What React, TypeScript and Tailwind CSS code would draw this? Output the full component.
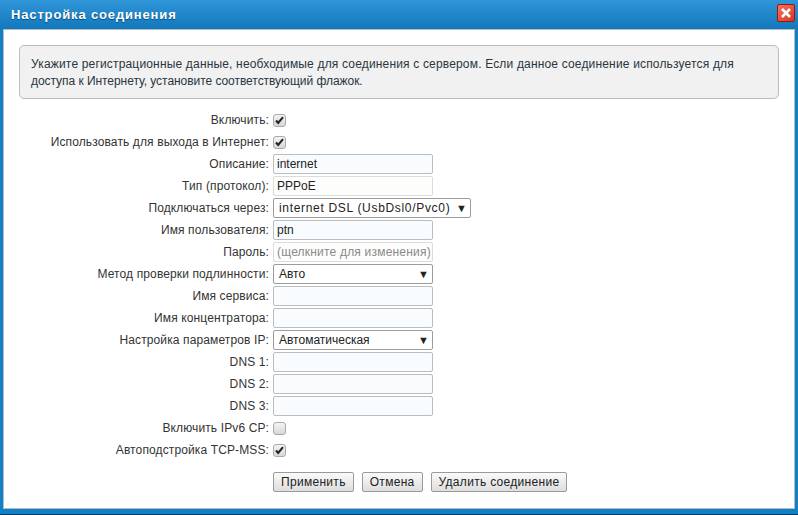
type Row =
  | { label: string; kind: "check"; checked: boolean }
  | { label: string; kind: "input"; value?: string; disabled?: boolean; muted?: boolean }
  | { label: string; kind: "select"; value: string; wide?: boolean };

const rows: Row[] = [
  { label: "Включить:", kind: "check", checked: true },
  { label: "Использовать для выхода в Интернет:", kind: "check", checked: true },
  { label: "Описание:", kind: "input", value: "internet" },
  { label: "Тип (протокол):", kind: "input", value: "PPPoE", disabled: true },
  { label: "Подключаться через:", kind: "select", value: "internet DSL (UsbDsl0/Pvc0)", wide: true },
  { label: "Имя пользователя:", kind: "input", value: "ptn" },
  { label: "Пароль:", kind: "input", value: "(щелкните для изменения)", disabled: true, muted: true },
  { label: "Метод проверки подлинности:", kind: "select", value: "Авто" },
  { label: "Имя сервиса:", kind: "input" },
  { label: "Имя концентратора:", kind: "input" },
  { label: "Настройка параметров IP:", kind: "select", value: "Автоматическая" },
  { label: "DNS 1:", kind: "input" },
  { label: "DNS 2:", kind: "input" },
  { label: "DNS 3:", kind: "input" },
  { label: "Включить IPv6 CP:", kind: "check", checked: false },
  { label: "Автоподстройка TCP-MSS:", kind: "check", checked: true },
];

function Check({ checked }: { checked: boolean }) {
  return (
    <span className="flex h-[13px] w-[13px] items-center justify-center rounded-[3px] border border-[#a9a9a9] bg-gradient-to-b from-[#f4f4f4] to-[#d8d8d8]">
      {checked && (
        <svg width="9" height="9" viewBox="0 0 9 9">
          <path d="M1 4.5 L3.2 7 L8 1.2" fill="none" stroke="#222" strokeWidth="2.1" />
        </svg>
      )}
    </span>
  );
}

function Field({ row }: { row: Row }) {
  if (row.kind === "check") return <Check checked={row.checked} />;
  if (row.kind === "select") {
    return (
      <div
        className={`flex h-[20px] items-center justify-between rounded-[2px] border border-[#9c9c9c] bg-white pl-[5px] pr-[3px] text-[#222] ${
          row.wide ? "w-[198px] tracking-[0.68px]" : "w-[160px]"
        }`}
      >
        <span>{row.value}</span>
        <span className="text-[11px] leading-none tracking-normal text-[#222]">▼</span>
      </div>
    );
  }
  return (
    <div
      className={`flex h-[20px] w-[160px] items-center whitespace-nowrap rounded-[2px] border px-[3px] ${
        row.disabled ? "border-[#dcdcdc] bg-[#fdfdfb]" : "border-[#bcbcbc] bg-[#f8fcff]"
      } ${row.muted ? "text-[#8a8a8a] tracking-[0.2px]" : "text-[#222]"}`}
    >
      {row.value}
    </div>
  );
}

function Btn({ children }: { children: string }) {
  return (
    <div className="flex h-[20px] items-center rounded-[2px] border border-[#9a9a9a] bg-gradient-to-b from-[#fafafa] to-[#dedede] px-[7px] text-[12px] tracking-[0.3px] text-[#222]">
      {children}
    </div>
  );
}

export default function App() {
  return (
    <div className="flex h-[515px] w-[798px] flex-col overflow-hidden border-b border-[#0d3a5c] bg-[#1280c8] font-['Liberation_Sans',Arial,sans-serif] text-[12px]">
      {/* title bar */}
      <div className="flex h-[29px] shrink-0 items-center justify-between bg-gradient-to-b from-[#2f96d8] to-[#1078bd] pl-[11px] pr-[3px]">
        <span className="text-[13px] font-bold tracking-[0.85px] text-white [text-shadow:0_1px_1px_#0b4a78]">
          Настройка соединения
        </span>
        <div className="mb-[4px] flex h-[18px] w-[18px] items-center justify-center rounded-[2px] border border-[#a81010] bg-gradient-to-br from-[#f0735a] to-[#d8341c]">
          <svg width="12" height="12" viewBox="0 0 12 12">
            <path d="M2 2 L10 10 M10 2 L2 10" stroke="#fff" strokeWidth="2.6" />
          </svg>
        </div>
      </div>

      {/* content */}
      <div className="mx-[3px] mb-[5px] flex-1 border border-[#b8b8b8] bg-white px-[15px] pt-[15px] text-[#222]">
        <div className="h-[54px] rounded-[5px] border border-[#bdbdbd] bg-[#f1f1f1] px-[11px] py-[10px] leading-[17px] text-[#2a3540]">
          <div className="whitespace-nowrap tracking-[0.17px]">
            Укажите регистрационные данные, необходимые для соединения с сервером. Если данное соединение используется для
          </div>
          <div className="whitespace-nowrap tracking-[-0.05px]">
            доступа к Интернету, установите соответствующий флажок.
          </div>
        </div>

        <div className="mt-[10px] flex flex-col">
          {rows.map((row) => (
            <div key={row.label} className="flex h-[22px] items-center gap-[4px]">
              <div className="w-[250px] whitespace-nowrap text-right tracking-[0.12px] text-[#333]">{row.label}</div>
              <Field row={row} />
            </div>
          ))}
        </div>

        <div className="ml-[254px] mt-[11px] flex gap-[8px]">
          <Btn>Применить</Btn>
          <Btn>Отмена</Btn>
          <Btn>Удалить соединение</Btn>
        </div>
      </div>
    </div>
  );
}
